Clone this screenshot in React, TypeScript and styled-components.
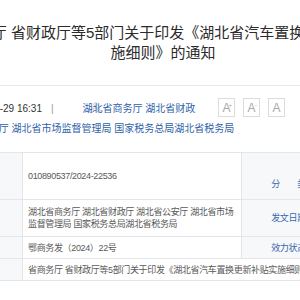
import React from "react";
import styled, { createGlobalStyle } from "styled-components";

const Global = createGlobalStyle`
  html, body { margin: 0; padding: 0; background: #fff; overflow: hidden; }
  body { font-family: "Liberation Sans", "Noto Sans CJK SC", sans-serif; }
`;

const Page = styled.div`
  width: 468px;
  margin-left: -71px;
`;

const Title = styled.h1`
  margin: 0;
  padding: 23px 12px 22px;
  font-size: 15px;
  line-height: 20px;
  font-weight: normal;
  color: #2b2b2b;
  text-align: center;
  border-bottom: 1px solid #e8e8e8;
`;

const Meta = styled.div`
  padding: 13px 112px 13px 7px;
  font-size: 10px;
  line-height: 20px;
  text-indent: 27px;
  color: #333;
`;

const FontTools = styled.div`
  float: right;
  display: flex;
  gap: 8px;
  margin: -1px 0 0 15px;
  text-indent: 0;
`;

const FontBtn = styled.span`
  box-sizing: border-box;
  width: 17px;
  height: 19px;
  border: 1px solid #dcdcdc;
  display: flex;
  align-items: center;
  justify-content: center;
  position: relative;
  color: #a8a8a8;
  font-size: 12px;
  line-height: 1;
`;

const Sup = styled.span`
  position: absolute;
  top: 3px;
  right: 2px;
  font-size: 6px;
  line-height: 1;
`;

const Sep = styled.span`
  color: #999;
  margin: 0 8px 0 9px;
`;

const Orgs = styled.span`
  color: #2f5fa9;
`;

const IconWrap = styled.span`
  display: inline-block;
  width: 11px;
  height: 11px;
  margin: 0 9px 0 1px;
  vertical-align: -1px;
`;

const Table = styled.div`
  display: grid;
  grid-template-columns: 94px 219px 94px 1fr;
  grid-template-rows: 47px 37px 22px 22px;
  border-top: 1px solid #e3e5e8;
  font-size: 9px;
  line-height: 12px;
  letter-spacing: -0.35px;
`;

const Label = styled.div<{ $top?: number }>`
  box-sizing: border-box;
  display: flex;
  align-items: center;
  justify-content: center;
  padding-top: ${(p) => p.$top ?? 0}px;
  background: #f7f8fa;
  color: #3767ae;
  border-right: 1px solid #e3e5e8;
  border-bottom: 1px solid #e3e5e8;
  white-space: nowrap;
`;

const Value = styled.div<{ $span?: number }>`
  box-sizing: border-box;
  display: flex;
  align-items: center;
  padding: 0 0 0 5px;
  color: #595959;
  border-right: 1px solid #e3e5e8;
  border-bottom: 1px solid #e3e5e8;
  grid-column: ${(p) => (p.$span ? `span ${p.$span}` : "auto")};
  white-space: ${(p) => (p.$span ? "nowrap" : "normal")};
  overflow: hidden;
`;

const OrgIcon = () => (
  <IconWrap>
    <svg width="11" height="11" viewBox="0 0 11 11" fill="none" stroke="#c9c9c9" strokeWidth="1">
      <circle cx="5.5" cy="2.3" r="1.6" />
      <circle cx="2.2" cy="8.6" r="1.6" />
      <circle cx="8.8" cy="8.6" r="1.6" />
      <path d="M5.5 3.9v2.2M2.2 7V6.1h6.6V7" />
    </svg>
  </IconWrap>
);

export default function App() {
  return (
    <>
      <Global />
      <Page>
        <Title>省商务厅 省财政厅等5部门关于印发《湖北省汽车置换更新补贴实施细则》的通知</Title>
        <Meta>
          <FontTools>
            <FontBtn>A<Sup>+</Sup></FontBtn>
            <FontBtn>A<Sup>-</Sup></FontBtn>
            <FontBtn>A</FontBtn>
          </FontTools>
          2024-03-29 16:31<Sep>|</Sep>
          <OrgIcon />
          <Orgs>湖北省商务厅 湖北省财政厅 湖北省公安厅 湖北省市场监督管理局 国家税务总局湖北省税务局</Orgs>
        </Meta>
        <Table>
          <Label>索 引 号</Label>
          <Value>010890537/2024-22536</Value>
          <Label $top={16}>分　　类</Label>
          <Value>综合政务</Value>

          <Label>发文机关</Label>
          <Value>湖北省商务厅 湖北省财政厅 湖北省公安厅 湖北省市场监督管理局 国家税务总局湖北省税务局</Value>
          <Label>发文日期</Label>
          <Value>2024-03-29</Value>

          <Label>发文字号</Label>
          <Value>鄂商务发（2024）22号</Value>
          <Label>效力状态</Label>
          <Value>有效</Value>

          <Label>标　　题</Label>
          <Value $span={3}>省商务厅 省财政厅等5部门关于印发《湖北省汽车置换更新补贴实施细则》的通知</Value>
        </Table>
      </Page>
    </>
  );
}
